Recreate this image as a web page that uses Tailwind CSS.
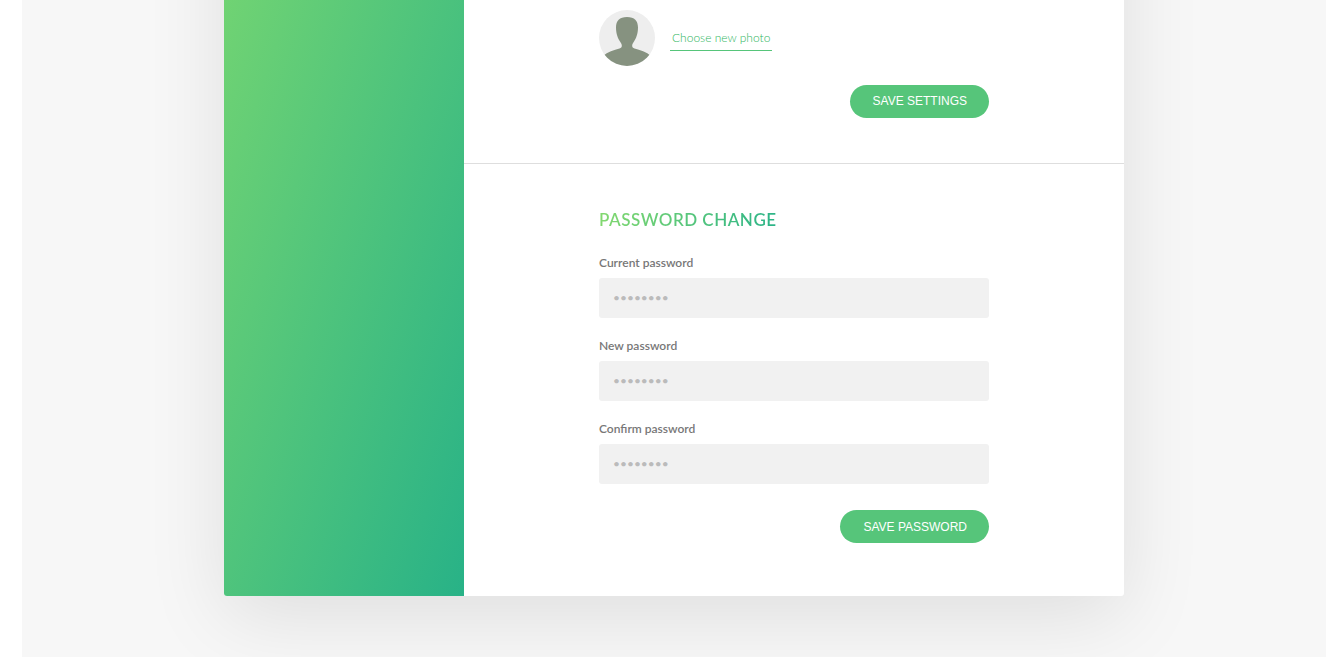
<!DOCTYPE html>
<html lang="en">
<head>
<meta charset="utf-8">
<title>Settings</title>
<script src="https://cdn.jsdelivr.net/npm/@tailwindcss/browser@4"></script>
</head>
<body class="bg-white font-['Lato',sans-serif]">
<main class="ml-[22px] mr-[17px] overflow-hidden bg-[#f7f7f7] pb-[61px]">
  <div class="mx-auto -mt-40 w-full max-w-[900px] rounded-b-[3px] bg-white pt-40 shadow-[0_20px_80px_rgba(0,0,0,0.1)]">
    <div class="flex">
      <aside class="w-[240px] shrink-0 rounded-bl-[3px] bg-[linear-gradient(109deg,#70d373,#28b287)]"></aside>
      <div class="flex-1">
        <section class="border-b border-[#dedede] px-[135px] pt-[10px] pb-[45px]">
          <div class="flex items-center gap-[15px]">
            <svg class="size-14" viewBox="0 0 56 56" role="img" aria-label="Profile photo">
              <defs><clipPath id="round"><circle cx="28" cy="28" r="28"/></clipPath></defs>
              <g clip-path="url(#round)">
                <rect width="56" height="56" fill="#eee"/>
                <path fill="#869280" d="M28 7C20.500 7 17 11 17 17.500C17 24 19 28.500 21 31.500C23.500 35 23.500 37.500 20.500 38.500C15 40 8.500 42 4 46V57H52V46C47.500 42 41 40 35.500 38.500C32.500 37.500 32.500 35 35 31.500C37 28.500 39 24 39 17.500C39 11 35.500 7 28 7Z"/>
              </g>
            </svg>
            <a href="#" class="border-b border-[#56c57a] px-[2px] pt-1 pb-1 text-[12px] leading-4 font-light text-[#30b660]">Choose new photo</a>
          </div>
          <div class="mt-[19px] flex justify-end">
            <button type="button" class="h-[33px] rounded-full bg-[#56c57a] pr-[22px] pb-px pl-[23px] font-['Liberation_Sans',Arial,sans-serif] text-[12px] text-white">SAVE SETTINGS</button>
          </div>
        </section>
        <form class="px-[135px] pt-11 pb-[53px]">
          <h2 class="w-fit bg-[linear-gradient(105deg,#84d96f,#2ab388)] bg-clip-text text-[17px] leading-6 font-semibold tracking-[0.5px] text-transparent">PASSWORD CHANGE</h2>
          <div class="mt-[23px] space-y-[20px]">
            <div>
              <label for="current" class="block text-[12px] leading-4 font-semibold text-[#777]">Current password</label>
              <input id="current" type="password" placeholder="••••••••" class="mt-[7px] block h-10 w-full rounded-[3px] bg-[#f1f1f1] px-[14px] pb-px text-[12px] outline-none placeholder:text-[#bbb]">
            </div>
            <div>
              <label for="new" class="block text-[12px] leading-4 font-semibold text-[#777]">New password</label>
              <input id="new" type="password" placeholder="••••••••" class="mt-[7px] block h-10 w-full rounded-[3px] bg-[#f1f1f1] px-[14px] pb-px text-[12px] outline-none placeholder:text-[#bbb]">
            </div>
            <div>
              <label for="confirm" class="block text-[12px] leading-4 font-semibold text-[#777]">Confirm password</label>
              <input id="confirm" type="password" placeholder="••••••••" class="mt-[7px] block h-10 w-full rounded-[3px] bg-[#f1f1f1] px-[14px] pb-px text-[12px] outline-none placeholder:text-[#bbb]">
            </div>
          </div>
          <div class="mt-[26px] flex justify-end">
            <button type="submit" class="h-[33px] rounded-full bg-[#56c57a] pr-[22px] pl-[23px] font-['Liberation_Sans',Arial,sans-serif] text-[12px] text-white">SAVE PASSWORD</button>
          </div>
        </form>
      </div>
    </div>
  </div>
</main>
</body>
</html>
